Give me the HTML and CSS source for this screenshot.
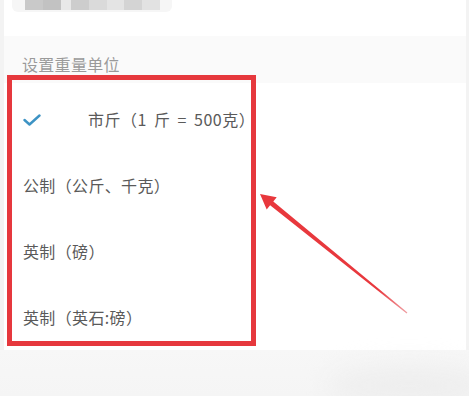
FILE: index.html
```html
<!DOCTYPE html>
<html lang="zh-CN">
<head>
<meta charset="utf-8">
<title>设置重量单位</title>
<link rel="stylesheet" href="styles.css">
</head>
<body>
<div class="screen">
  <div class="card">
    <div class="top">
      <div class="blur">
        <span class="b b1"></span><span class="b b2"></span><span class="b b3"></span><span class="b b4"></span><span class="b b5"></span><span class="b b6"></span><span class="b b7"></span><span class="b b8"></span>
      </div>
    </div>
    <div class="head">设置重量单位</div>
    <ul class="list">
      <li class="row selected">
        <svg class="check" viewBox="0 0 18 12" width="18" height="12"><path d="M1.5 6 L6.5 10.5 L16.5 1.5" fill="none" stroke="#3d93c4" stroke-width="2.4" stroke-linecap="round" stroke-linejoin="round"/></svg>
        <span class="label wide">市斤（1 斤 = 500克）</span>
      </li>
      <li class="row"><span class="label">公制（公斤、千克）</span></li>
      <li class="row"><span class="label">英制（磅）</span></li>
      <li class="row"><span class="label">英制（英石:磅）</span></li>
    </ul>
  </div>
  <div class="bottom"></div>
  <div class="redbox"></div>
  <svg class="arrow" viewBox="0 0 469 396" width="469" height="396">
    <defs>
      <linearGradient id="ag" x1="260" y1="194" x2="407" y2="313" gradientUnits="userSpaceOnUse">
        <stop offset="0" stop-color="#e8383d"/>
        <stop offset="0.8" stop-color="#e8383d"/>
        <stop offset="1" stop-color="#f0a0a4"/>
      </linearGradient>
    </defs>
    <polygon fill="url(#ag)" points="260,194 276.7,197.2 273.3,201.5 407.4,312.5 406.6,313.5 270.1,205.3 266.7,209.6"/>
  </svg>
</div>
</body>
</html>
```

FILE: styles.css
```css
* { box-sizing: border-box; }
html, body { margin: 0; padding: 0; }
body {
  background: #f3f3f3;
  font-family: "Noto Sans CJK SC", "Noto Sans", sans-serif;
}
.screen {
  position: relative;
  width: 469px;
  height: 396px;
  overflow: hidden;
  background: #f3f3f3;
  display: flex;
  flex-direction: column;
}
.card {
  margin: 0 3px 0 4px;
  background: #ffffff;
  display: flex;
  flex-direction: column;
}
.top {
  height: 36px;
  padding-left: 8px;
}
.blur {
  width: 160px;
  height: 12px;
  background: #f6f6f6;
  border-radius: 0 0 6px 6px;
  display: flex;
  padding: 0 12px 2px 13px;
  filter: blur(0.6px);
}
.b { height: 10px; flex: 1; }
.b1 { background: #c9c9c9; }
.b2 { background: #c2c2c2; }
.b3 { background: #e8e8e8; flex: 0.6; }
.b4 { background: #cdcdcd; }
.b5 { background: #dadada; }
.b6 { background: #e4e4e4; }
.b7 { background: #d4d4d4; }
.b8 { background: #e2e2e2; }
.head {
  height: 47px;
  background: #fafafa;
  color: #9a9a9a;
  font-size: 16px;
  line-height: 22px;
  letter-spacing: 0.3px;
  padding: 17px 0 0 18px;
}
.list {
  list-style: none;
  margin: 0;
  padding: 3px 0 0 0;
}
.row {
  height: 66px;
  display: flex;
  align-items: center;
  padding-left: 19px;
  color: #5a5a5a;
  font-size: 16px;
  letter-spacing: 0.35px;
}
.wide { word-spacing: 3px; letter-spacing: 0.5px; }
.check {
  flex: none;
  margin-right: 47px;
  margin-top: 1px;
}
.bottom {
  flex: 1;
  background: linear-gradient(180deg, #f7f7f7 0%, #f5f5f5 100%);
  position: relative;
}
.bottom::after {
  content: "";
  position: absolute;
  right: -20px;
  bottom: -10px;
  width: 160px;
  height: 40px;
  border-radius: 50%;
  background: #eeeeee;
  filter: blur(12px);
}
.redbox {
  position: absolute;
  left: 7px;
  top: 75px;
  width: 249px;
  height: 271px;
  border: 5px solid #e6383d;
}
.arrow {
  position: absolute;
  left: 0;
  top: 0;
}
```
